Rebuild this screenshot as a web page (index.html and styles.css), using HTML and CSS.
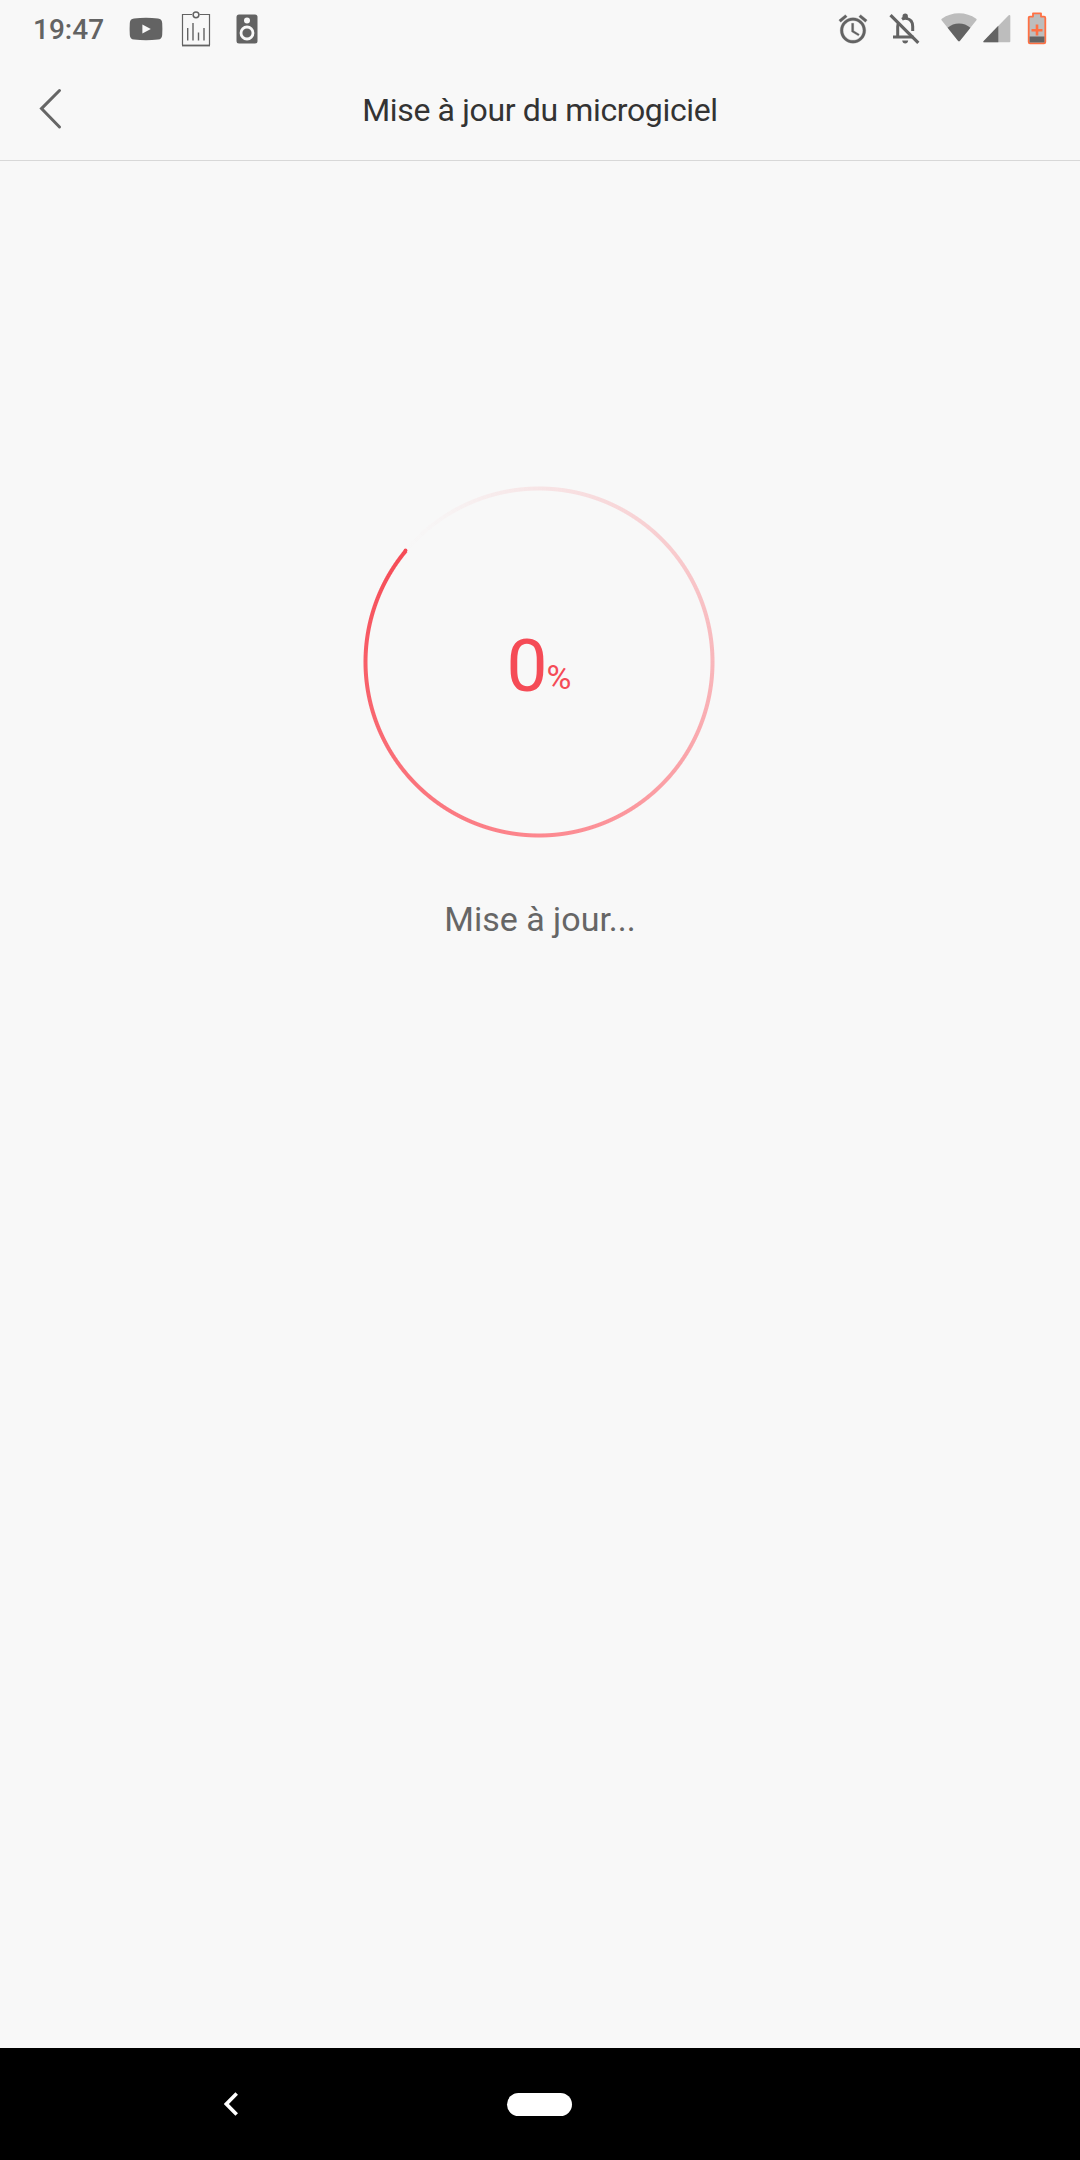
FILE: index.html
```html
<!DOCTYPE html>
<html lang="fr">
<head>
  <meta charset="UTF-8">
  <title>Mise à jour du microgiciel</title>
  <meta name="viewport" content="width=device-width, initial-scale=1">
  <link rel="stylesheet" href="styles.css">
</head>
<body>
  <div class="screen">
    <!-- Status bar -->
    <div class="status-bar">
      <span class="clock">19:47</span>
      <svg class="icon-video" width="34" height="24" viewBox="0 0 34 24">
        <path fill="#636363" d="M5 1.4Q17 .2 29 1.4Q33 1.8 33.2 6Q33.6 12 33.2 18Q33 22.2 29 22.6Q17 23.8 5 22.6Q1 22.2.8 18Q.4 12 .8 6Q1 1.8 5 1.4Z"/>
        <path fill="#f8f8f8" d="M13.4 7.4v9.2l8.4-4.6z"/>
      </svg>
      <svg class="icon-chart" width="30" height="36" viewBox="0 0 30 36">
        <g fill="none" stroke="#636363">
          <path stroke-width="1.2" d="M11 3.5H1.5V34M18.500 3.500H28.500V34"/>
          <path stroke-width="1.8" d="M1 34.500H29"/>
          <circle cx="15" cy="3.800" r="2.900" stroke-width="1.500"/>
          <path stroke-width="1.400" d="M6.700 17v12.500M12 12v17.500M17.500 21.500v8M23 17v12.500"/>
        </g>
      </svg>
      <svg class="icon-speaker" width="22" height="30" viewBox="0 0 22 30">
        <rect x=".5" y=".5" width="21" height="29" rx="2.500" fill="#636363"/>
        <circle cx="11" cy="6.500" r="3" fill="#f8f8f8"/>
        <circle cx="11" cy="19" r="6" fill="none" stroke="#f8f8f8" stroke-width="2.800"/>
      </svg>

      <div class="system-icons">
        <svg class="icon-alarm" width="34" height="34" viewBox="0 0 24 24">
          <path fill="#636363" stroke="#636363" stroke-width=".2" d="M22 5.720l-4.600-3.860-1.290 1.530 4.600 3.860L22 5.720zM7.880 3.390L6.600 1.860 2 5.710l1.290 1.530 4.590-3.850zM12.500 8H11v6l4.750 2.850.75-1.230-4-2.370V8zM12 4c-4.970 0-9 4.030-9 9s4.020 9 9 9c4.970 0 9-4.030 9-9s-4.030-9-9-9zm0 16c-3.870 0-7-3.130-7-7s3.130-7 7-7 7 3.130 7 7-3.130 7-7 7z"/>
        </svg>
        <svg class="icon-bell" width="32" height="32" viewBox="0 0 32 32">
          <g fill="none" stroke="#636363" stroke-width="3">
            <path d="M4 24.100h20.500M8.700 24V13.500q0-2 1-3.700M13 6.300q2-1.300 4.500-.9 6.200 1.200 6.200 8.100v4.500"/>
            <path stroke-width="3.200" d="M1.500 2.200L29.300 29.800"/>
          </g>
          <path fill="#636363" d="M13.500 5.500V3.200a2.700 2.700 0 0 1 5.400 0V5.500zM13.200 27.500h6q-.4 2.900-3 2.900t-3-2.900z"/>
        </svg>
        <svg class="icon-wifi" width="36" height="29" viewBox="0 0 36 29">
          <path fill="#bdbdbd" d="M.6 7.300Q-.1 6.500.8 5.800Q8.500.3 18 .3T35.200 5.800Q36.100 6.500 35.400 7.300L19 27.700Q18 28.800 17 27.700Z"/>
          <path fill="#636363" d="M6.600 14.700Q11.500 10.400 18 10.400T29.400 14.700L19 27.700Q18 28.800 17 27.700Z"/>
        </svg>
        <svg class="icon-signal" width="28" height="28" viewBox="0 0 28 28">
          <path fill="#bdbdbd" d="M25.400.6Q27.300-.9 27.300 1.300V26.500Q27.300 27.300 26.500 27.300H1.300Q-.3 27.300.7 25.900Z"/>
          <path fill="#636363" d="M15.300 10.800V27.300H1.300Q-.3 27.300.7 25.900Z"/>
        </svg>
        <svg class="icon-battery" width="20" height="33" viewBox="0 0 20 33">
          <path fill="#bdbdbd" stroke="#ff7043" stroke-width="1.800" stroke-linejoin="round" d="M6 1.300H14V4.600H17Q18.300 4.600 18.300 6V30Q18.300 31.300 17 31.300H3Q1.700 31.300 1.700 30V6Q1.700 4.600 3 4.600H6Z"/>
          <path fill="#636363" d="M2.600 24.500H17.400V30.400H2.600Z"/>
          <path stroke="#ff7043" stroke-width="2.600" d="M10 12.500V23.500M4.500 18.300H15.500"/>
        </svg>
      </div>
    </div>

    <!-- Header -->
    <header class="title-bar">
      <svg class="back-icon" width="24" height="42" viewBox="0 0 24 42">
        <path fill="none" stroke="#666" stroke-width="3" stroke-linecap="round" d="M20.500 2.500L2.500 20.600L20.500 39"/>
      </svg>
      <h1 class="title">Mise à jour du microgiciel</h1>
    </header>

    <!-- Update progress -->
    <main class="content">
      <div class="progress">
        <svg class="ring-cap" width="352" height="352" viewBox="0 0 352 352">
          <circle cx="42.500" cy="64.400" r="1.900" fill="#f54b56"/>
        </svg>
        <div class="value"><span class="number">0</span><span class="percent">%</span></div>
      </div>
      <p class="message">Mise à jour...</p>
    </main>

    <!-- Navigation bar -->
    <nav class="nav-bar">
      <svg class="nav-back" width="16" height="26" viewBox="0 0 16 26">
        <path fill="none" stroke="#fff" stroke-width="3.600" d="M12.700 2.600L2.400 13L12.700 23.400"/>
      </svg>
      <div class="nav-home"></div>
    </nav>
  </div>
</body>
</html>
```
FILE: styles.css
```css
:root {
  --bg: #f8f8f8;
  --red: #f54b56;
  --icon: #636363;
}
body {
  margin: 0;
  background: var(--bg);
  font-family: Roboto, "Liberation Sans", sans-serif;
}
svg { display: block; flex: none; }
.screen {
  width: 1080px;
  height: 2160px;
  display: flex;
  flex-direction: column;
  overflow: hidden;
}

/* Status bar */
.status-bar {
  height: 58px;
  box-sizing: border-box;
  padding: 0 33px;
  display: flex;
  align-items: center;
  color: var(--icon);
}
.clock {
  width: 95px;
  padding-top: 2px;
  font-size: 28px;
  font-weight: 500;
  line-height: 56px;
}
.icon-video { margin-left: 1px; margin-top: -1px; }
.icon-chart { margin-left: 18px; margin-top: -1px; }
.icon-speaker { margin-left: 25px; margin-top: -1px; }
.system-icons {
  display: flex;
  align-items: center;
  margin-left: auto;
  margin-top: -1px;
}
.icon-bell { margin-left: 19px; }
.icon-wifi { margin-left: 20px; margin-top: -3px; }
.icon-signal { margin-left: 6px; }
.icon-battery { margin-left: 16px; }

/* Header */
.title-bar {
  height: 103px;
  box-sizing: border-box;
  padding: 0 39px;
  border-bottom: 1px solid #d8d8d8;
  display: flex;
  align-items: center;
}
.back-icon { margin-top: -1px; }
.title {
  flex: 1;
  margin: 2px 24px 0 0;
  text-align: center;
  font-size: 32px;
  font-weight: 400;
  letter-spacing: -0.36px;
  line-height: 40px;
  color: #333;
}

/* Update progress */
.content {
  flex: 1;
  display: flex;
  flex-direction: column;
  align-items: center;
}
.progress {
  position: relative;
  width: 352px;
  height: 352px;
  margin-top: 325px;
  margin-right: 2px;
  display: flex;
  align-items: center;
  justify-content: center;
}
.progress::before {
  content: "";
  position: absolute;
  inset: 0;
  background: conic-gradient(from 310deg, rgba(245, 75, 86, 0), rgba(245, 75, 86, 0.02) 4%, rgba(245, 75, 86, 0.11) 14%, rgba(250, 75, 86, 0.38) 39%, rgba(255, 75, 86, 0.65) 64%, #f54b56);
  -webkit-mask: radial-gradient(circle, transparent 171px, #000 172px, #000 175px, transparent 176px);
  mask: radial-gradient(circle, transparent 171px, #000 172px, #000 175px, transparent 176px);
}
.ring-cap {
  position: absolute;
  inset: 0;
}
.value {
  display: flex;
  align-items: baseline;
  padding-top: 20px;
  color: var(--red);
  line-height: 84px;
}
.number { font-size: 73px; }
.percent {
  font-size: 34px;
  margin-left: -1px;
  position: relative;
  top: -2px;
}
.message {
  margin: 61px 0 0;
  font-size: 34px;
  line-height: 40px;
  color: #666;
}

/* Navigation bar */
.nav-bar {
  height: 112px;
  box-sizing: border-box;
  padding-left: 224px;
  display: flex;
  align-items: center;
  background: #000;
}
.nav-home {
  width: 65px;
  height: 23px;
  margin-left: 267px;
  border-radius: 12px;
  background: #fff;
}
```
